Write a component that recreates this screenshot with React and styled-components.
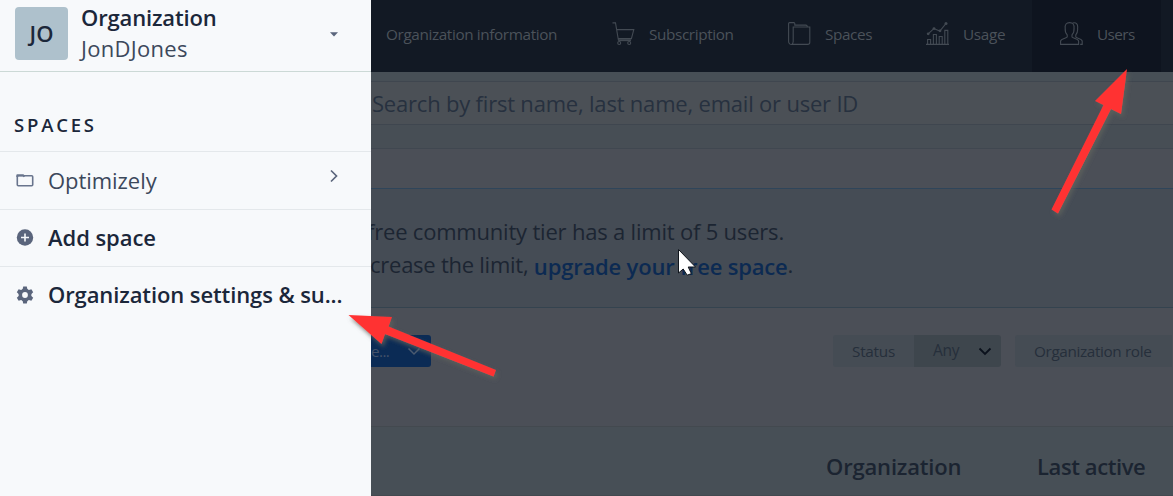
import React from "react";
import styled, { createGlobalStyle } from "styled-components";

const GlobalStyle = createGlobalStyle`
  * { box-sizing: border-box; }
  body { margin: 0; overflow: hidden; font-family: "Open Sans", "Noto Sans", sans-serif; }
`;

const Page = styled.div`
  position: relative;
  display: flex;
  width: 1173px;
  height: 496px;
  overflow: hidden;
  background: #4b4f57;
`;

const Label = styled.span`
  display: block;
  white-space: nowrap;
  font-size: ${(p) => p.$size || 22}px;
  font-weight: ${(p) => p.$weight || 400};
  letter-spacing: ${(p) => p.$track || 0}px;
  line-height: ${(p) => p.$line || 30}px;
  color: ${(p) => p.$color || "#1b273a"};
`;

/* Sidebar */
const Sidebar = styled.aside`
  flex: none;
  width: 371px;
  height: 496px;
  background: #f7f9fb;
`;
const OrgSwitcher = styled.header`
  display: flex;
  align-items: flex-start;
  height: 72px;
  padding: 7px 32px 0 15px;
  border-bottom: 1px solid #ccd9d6;
`;
const Avatar = styled.div`
  display: flex;
  align-items: center;
  justify-content: center;
  width: 53px;
  height: 53px;
  border-radius: 4px;
  background: #aec1cc;
`;
const OrgNames = styled.div`
  flex: 1;
  margin: -5px 0 0 13px;
`;
const Caret = styled.svg`
  margin-top: 25px;
`;
const SectionTitle = styled.div`
  height: 80px;
  padding: 38px 0 0 14px;
  border-bottom: 1px solid #e4e8eb;
`;
const NavRow = styled.div`
  display: flex;
  align-items: center;
  height: ${(p) => p.$height || 57}px;
  padding: 0 28px 2px 16px;
  border-bottom: ${(p) => (p.$last ? "none" : "1px solid #e4e8eb")};
`;
const RowIcon = styled.svg`
  flex: none;
  margin: 1px 14px 0 0;
`;
const RowChevron = styled.svg`
  margin: -8px 4px 0 auto;
`;

/* Main */
const Main = styled.main`
  flex: 1;
  min-width: 0;
  overflow: hidden;
`;
const TopBar = styled.nav`
  display: flex;
  height: 72px;
  background: #121924;
`;
const Tab = styled.div`
  display: flex;
  align-items: center;
  flex: none;
  width: ${(p) => p.$width}px;
  padding: 0 0 4px ${(p) => p.$pad || 28}px;
  background: ${(p) => (p.$active ? "#0e141f" : "transparent")};
`;
const TabIcon = styled.svg`
  flex: none;
  width: 24px;
  height: 24px;
  margin-right: 13px;
  fill: none;
  stroke: #434a53;
  stroke-width: 1.1;
`;
const Strip = styled.div`
  height: ${(p) => p.$height}px;
  background: ${(p) => p.$bg};
  border-bottom: 1px solid ${(p) => p.$line};
`;
const SearchField = styled(Strip)`
  padding: 6px 0 0 1px;
`;
const Notice = styled(Strip)`
  padding-top: 27px;
`;
const NoticeLine = styled.div`
  display: flex;
  height: 33px;
  margin-left: ${(p) => p.$shift || 0}px;
`;
const Toolbar = styled(Strip)`
  display: flex;
  padding-top: 27px;
`;
const InviteButton = styled.div`
  display: flex;
  flex: none;
  align-items: center;
  width: 60px;
  height: 32px;
  border-radius: 0 3px 3px 0;
  background: #0b2b55;
`;
const FilterLabel = styled.div`
  flex: none;
  width: ${(p) => p.$width}px;
  height: 32px;
  margin-left: ${(p) => p.$gap}px;
  padding: 1px 0 0 19px;
  border-radius: 3px 0 0 3px;
  background: #454c54;
`;
const FilterValue = styled.div`
  display: flex;
  flex: none;
  width: 87px;
  height: 32px;
  padding: 0 9px 0 19px;
  justify-content: space-between;
  border-radius: 0 3px 3px 0;
  background: #3e464d;
`;
const Chevron = styled.svg`
  flex: none;
  margin: ${(p) => p.$margin};
`;
const TableHead = styled.div`
  display: flex;
  height: 69px;
  padding: 24px 0 0 455px;
  background: #474f56;
  border-bottom: 1px solid #42494f;
`;
const HeadCell = styled.div`
  flex: none;
  width: 211px;
`;

/* Annotations drawn over the page */
const Overlay = styled.svg`
  position: absolute;
  left: 0;
  top: 0;
  pointer-events: none;
`;

const navText = "#4b525a";

export default function App() {
  return (
    <Page>
      <GlobalStyle />
      <Sidebar>
        <OrgSwitcher>
          <Avatar>
            <Label $weight={600} $size={22} $line={31}>JO</Label>
          </Avatar>
          <OrgNames>
            <Label $weight={600} $track={-0.15} $line={31}>Organization</Label>
            <Label $color="#3c485b" $track={0.3} $line={31}>JonDJones</Label>
          </OrgNames>
          <Caret width="10" height="5" viewBox="0 0 10 5">
            <path d="M1 0.3h8L5 4.5z" fill="#5a657c" />
          </Caret>
        </OrgSwitcher>
        <SectionTitle>
          <Label $size={18.5} $weight={600} $track={2.8}>SPACES</Label>
        </SectionTitle>
        <NavRow $height={58}>
          <RowIcon width="18" height="16" viewBox="0 0 18 16" fill="none" stroke="#69758d" strokeWidth="1.6">
            <rect x="1.300" y="3.800" width="15.400" height="10" rx="1" />
            <path d="M1.300 5V3.200h5.800l1.400 1.400" strokeWidth="2" strokeLinejoin="round" />
          </RowIcon>
          <Label $color="#3c485b" $track={-0.05}>Optimizely</Label>
          <RowChevron width="10" height="14" viewBox="0 0 10 14" fill="none" stroke="#5a657c" strokeWidth="1.7">
            <path d="M2 1.5L7.5 7L2 12.5" />
          </RowChevron>
        </NavRow>
        <NavRow>
          <RowIcon width="18" height="18" viewBox="0 0 18 18">
            <circle cx="9" cy="8.500" r="8.2" fill="#5a657c" />
            <path d="M9 4.500v8M5 8.500h8" stroke="#f7f9fb" strokeWidth="1.6" />
          </RowIcon>
          <Label $weight={600} $track={-0.05}>Add space</Label>
        </NavRow>
        <NavRow $last $height={56}>
          <RowIcon width="18" height="18" viewBox="0 0 18 18">
            <g fill="#5a657c">
              <circle cx="9" cy="9" r="6.4" />
              {[0, 60, 120, 180, 240, 300].map((a) => (
                <path key={a} d="M7.2 0.6h3.6l0.7 3.4h-5z" transform={`rotate(${a} 9 9)`} />
              ))}
            </g>
            <circle cx="9" cy="9" r="2.9" fill="#f7f9fb" />
          </RowIcon>
          <Label $weight={600} $track={-0.1}>Organization settings &amp; su...</Label>
        </NavRow>
      </Sidebar>

      <Main>
        <TopBar>
          <Tab $width={213} $pad={15}>
            <Label $size={15.3} $color={navText} $track={-0.38}>Organization information</Label>
          </Tab>
          <Tab $width={176}>
            <TabIcon viewBox="0 0 24 24">
              <path d="M0.5 0.9h3L6.4 18H19M4.6 7.6h17.2l-2.4 9H6.3" />
              <path d="M6.3 18.6h12.6" />
              <circle cx="7.2" cy="21" r="1.5" />
              <circle cx="17.2" cy="21" r="1.5" />
            </TabIcon>
            <Label $size={15.3} $color={navText} $track={-0.38}>Subscription</Label>
          </Tab>
          <Tab $width={139}>
            <TabIcon viewBox="0 0 24 24">
              <path d="M4.6 22.4C2 22.8 0.6 21.5 0.6 19.5V1.6q0-1 1-1h4.2q1 0 1 1v1.5h11q1.5 0 1.5 1.8" />
              <path d="M5.2 5h16.6v15.2q0 2.2-2.2 2.2H3.6q1.6-.6 1.6-2.8z" />
            </TabIcon>
            <Label $size={15.3} $color={navText} $track={-0.4}>Spaces</Label>
          </Tab>
          <Tab $width={133} $pad={27}>
            <TabIcon viewBox="0 0 24 24">
              <path d="M0 22.4h23M1.6 22v-4.5h3V22M7.4 22v-9.5h3V22M13.2 22v-7.5h3V22M18.8 22V8.4h3V22" />
              <path d="M2.2 11.8l5.6-5.2 6 2.4 6.3-7.6" />
              <g fill="#434a53" stroke="none">
                <circle cx="2.2" cy="11.8" r="1.4" />
                <circle cx="8" cy="6.6" r="1.4" />
                <circle cx="14" cy="8.8" r="1.4" />
                <circle cx="20" cy="1.6" r="1.5" />
              </g>
            </TabIcon>
            <Label $size={15.3} $color={navText} $track={-0.3}>Usage</Label>
          </Tab>
          <Tab $width={129} $active>
            <TabIcon viewBox="0 0 24 24">
              <path d="M0.6 22.4v-3.2c0-2.3 5.6-2.6 6.6-4.2v-2.2C5.2 11 5 8.6 5.2 6.4 4.6 2.4 6.6.6 9.6.6s5 1.8 4.4 5.8c.2 2.2 0 4.6-2 6.4V15c1 1.600 6.600 1.900 6.600 4.200v3.200z" />
              <path d="M12.600 1.100c3.400-1.300 5.600.9 5 5.300.2 2.200 0 4.600-1.800 6.400V15c1 1.600 6.400 1.900 6.400 4.200v3.200h-2" />
            </TabIcon>
            <Label $size={15.3} $color={navText} $track={-0.6}>Users</Label>
          </Tab>
        </TopBar>

        <Strip $height={10} $bg="#474f56" $line="#3f464f" />
        <SearchField $height={43} $bg="#4b5056" $line="#3f464f">
          <Label $color="#27313f" $track={-0.2}>Search by first name, last name, email or user ID</Label>
        </SearchField>
        <Strip $height={24} $bg="#474e55" $line="#404750" />
        <Strip $height={40} $bg="#4b4f57" $line="#2f455a" />
        <Notice $height={119} $bg="#454c55" $line="#34434f">
          <NoticeLine $shift={-4}>
            <Label $color="#1c2532" $track={-0.2}>free community tier has a limit of 5 users.</Label>
          </NoticeLine>
          <NoticeLine $shift={-1}>
            <Label $color="#1c2532" $track={-0.25}>crease the limit,&nbsp;</Label>
            <Label $color="#0c2a52" $weight={600} $track={-0.18} $line={34}>upgrade your free space</Label>
            <Label $color="#1c2532">.</Label>
          </NoticeLine>
        </Notice>
        <Toolbar $height={119} $bg="#4b4f57" $line="#43494f">
          <InviteButton>
            <Label $size={15.3} $color="#43526a" $track={-0.6}>e...</Label>
            <Chevron $margin="0 0 0 18px" width="14" height="9" viewBox="0 0 14 9" fill="none" stroke="#4b5b70" strokeWidth="1.5">
              <path d="M1.500 1.500L7 7L12.500 1.500" />
            </Chevron>
          </InviteButton>
          <FilterLabel $width={81} $gap={402}>
            <Label $size={15.3} $color="#262f3b" $track={-0.25}>Status</Label>
          </FilterLabel>
          <FilterValue>
            <Label $size={15.5} $color="#262f3b" $track={-0.3}>Any</Label>
            <Chevron $margin="12px 0 0 0" width="14" height="9" viewBox="0 0 14 9" fill="none" stroke="#0b111c" strokeWidth="1.8">
              <path d="M1.500 1.500L7 7L12.500 1.500" />
            </Chevron>
          </FilterValue>
          <FilterLabel $width={157} $gap={14}>
            <Label $size={15.3} $color="#262f3b" $track={-0.37}>Organization role</Label>
          </FilterLabel>
        </Toolbar>
        <TableHead>
          <HeadCell>
            <Label $weight={600} $color="#1b2431" $track={-0.17}>Organization</Label>
          </HeadCell>
          <HeadCell>
            <Label $weight={600} $color="#1b2431" $track={-0.4}>Last active</Label>
          </HeadCell>
        </TableHead>
      </Main>

      <Overlay width="1173" height="496" viewBox="0 0 1173 496">
        <defs>
          <filter id="soft" x="-20%" y="-20%" width="140%" height="140%">
            <feDropShadow dx="2" dy="3" stdDeviation="2" floodColor="#5e625c" floodOpacity="0.8" />
          </filter>
        </defs>
        <g fill="#ff3333" filter="url(#soft)">
          <path d="M1127 69L1121 114L1111 109L1058 213.500L1051.500 209.500L1103.500 105L1095 101z" />
          <path d="M348.500 315L392 317L388.500 326.500L496 370L493.500 376.500L385 334L381.500 344z" />
        </g>
        <path
          d="M678.500 249.500V273L683.200 269L687.200 275.200L691.400 273.600L688.200 267H695.500z"
          fill="#fff"
          stroke="#10151c"
          strokeWidth="1"
        />
      </Overlay>
    </Page>
  );
}
